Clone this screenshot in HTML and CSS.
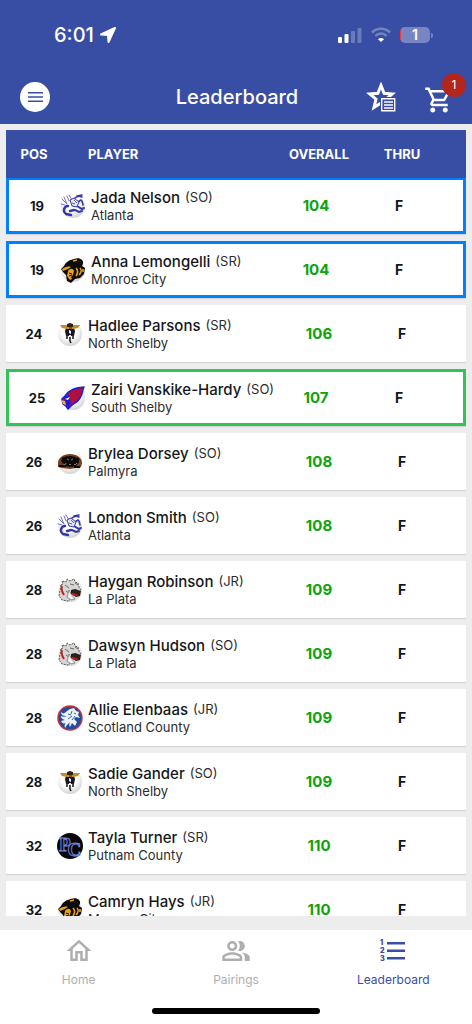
FILE: index.html
```html
<!DOCTYPE html>
<html lang="en">
<head>
  <meta charset="UTF-8">
  <meta name="viewport" content="width=device-width, initial-scale=1.0">
  <title>Leaderboard</title>
  <link rel="stylesheet" href="styles.css">
</head>
<body>
  <!-- team logos, used by the rows below -->
  <svg class="sprites" aria-hidden="true">
    <defs>
      <radialGradient id="disc" cx="45%" cy="35%" r="65%">
        <stop offset="0.5" stop-color="#fff"/>
        <stop offset="1" stop-color="#d4d4d4"/>
      </radialGradient>
    </defs>
    <symbol id="atlanta" viewBox="0 0 26 26">
      <circle cx="13" cy="13" r="12" fill="url(#disc)"/>
      <g fill="none" stroke="#3438a8" stroke-linecap="round">
        <path d="M4 4l3 7M2 6l4 4M9 2l3 5M7 3l2 5M1 11l4 1" stroke-width="0.7"/>
        <path d="M8 13c-4 0-5 5-3 7M6 21l5 1M10 18l4-1" stroke-width="2.400"/>
        <path d="M15 5c2-2 5-2 7-1M17 3l5-1M18 9l3-2M22 8l1 4" stroke-width="1.600"/>
        <path d="M17 13l5 3 2-1M15 17l4 2 3-1" stroke-width="2"/>
      </g>
      <path d="M10 7l4-2 5 4-2 5-5-1z" fill="#e8e8f8" stroke="#3438a8" stroke-width="1"/>
      <path d="M14 7l3 3M12 10l3 1" stroke="#3438a8" stroke-width="0.8"/>
    </symbol>
    <symbol id="monroe" viewBox="0 0 26 26">
      <circle cx="13" cy="13" r="12" fill="url(#disc)"/>
      <path d="M1 12l3-3c2-4 5-6 10-7 3-1 6-1 8 1 2 2 1 4 0 6l3 2-1 6-4 4-5 1-4 4-4-2-1-6-3-3z" fill="#0c0b09"/>
      <path d="M2 12c3-2 6-3 9-2l-3 2-5 2z" fill="#e8a11c"/>
      <path d="M8 14c2-3 5-3 6 0l-1 4-2 2 1 2-2 1-3-4z" fill="#e8a11c"/>
      <path d="M16 11c2 2 2 5 0 8M20 11c2 2 1 5-1 7M23 12v3M13 4l4-1" stroke="#e8a11c" stroke-width="1.600" fill="none"/>
      <path d="M9 16l3 1M9 19l3-1" stroke="#0c0b09" stroke-width="1"/>
    </symbol>
    <symbol id="northshelby" viewBox="0 0 26 26">
      <circle cx="13" cy="13" r="12" fill="url(#disc)"/>
      <path d="M9 7h8l1 3-1 5H9l-1-5z" fill="#17181c"/>
      <path d="M3 4h20l-2 3-5 1h-6L5 7z" fill="#c08f22"/>
      <path d="M10 3l3-1 3 1v3h-6z" fill="#2b211b"/>
      <path d="M12 6h3v2h-3z" fill="#a33a2b"/>
      <path d="M12 9l2 1v3l-2-1zM12 14h2v3h-2z" fill="#eee"/>
      <path d="M10 14v4M16 14v4M13 16v4l1 2" stroke="#222" stroke-width="1.600" fill="none"/>
    </symbol>
    <symbol id="southshelby" viewBox="0 0 26 26">
      <circle cx="13" cy="13" r="12" fill="url(#disc)"/>
      <path d="M2 14l3-3c4-6 9-8 19-9-2 4-1 7-4 11-3 5-6 5-9 8l-3 3-2-3-3-2z" fill="#b01040" stroke="#1c1ce0" stroke-width="1.500" stroke-linejoin="round"/>
      <path d="M4 12l5-2 1 5 1 3-3 5-3-6z" fill="#1c1ce0"/>
      <path d="M1 15l4 1 1 4-3-1z" fill="#f0b52c"/>
      <path d="M5 14l5-2-2 3z" fill="#fff"/>
    </symbol>
    <symbol id="palmyra" viewBox="0 0 26 26">
      <circle cx="13" cy="13" r="12" fill="url(#disc)"/>
      <path d="M1 14c0-5 5-9 12-9s12 4 12 9l-1 4-5 1-6 1-8-1-4-1z" fill="#7a4119"/>
      <path d="M4 12c1-4 5-5 9-5s9 2 9 6l-3 4-5 1-7-1z" fill="#0d0b0a"/>
      <path d="M2 17h7M17 18h6M5 10l2-1M20 9l2 2" stroke="#0d0b0a" stroke-width="2"/>
      <path d="M6 15l2 1 1-2M12 15l1 1 1-1M17 15l1 1 2-2M10 10l2 1M16 10l-2 1" stroke="#a3968c" stroke-width="0.800" fill="none"/>
    </symbol>
    <symbol id="laplata" viewBox="0 0 26 26">
      <circle cx="13" cy="13" r="12" fill="url(#disc)"/>
      <path d="M4 8l2-1-1-3 4 1 1-3 3 2 4-2 1 3 3 1 1 4 2 3-3 3-4-1-4 1 2 5-4 3-6-1-3-4z" fill="#d5d5d3" stroke="#555" stroke-width="1" stroke-dasharray="2 1"/>
      <path d="M5 9c-1 3 0 6 2 9" stroke="#c4231f" stroke-width="2" fill="none"/>
      <path d="M14 13l4-1 6 2-1 5-4 1-5-3z" fill="#28201f"/>
      <path d="M15 16l5 1 1 2-6-1z" fill="#c4231f"/>
      <path d="M8 8l4 3M13 7l4 1M18 6l3 2M9 14l3 2" stroke="#666" stroke-width="1" fill="none"/>
      <path d="M12 13l2 4 4 5-4 1-4-3z" fill="#efefed" stroke="#777" stroke-width="0.800"/>
    </symbol>
    <symbol id="scotland" viewBox="0 0 26 26">
      <circle cx="13" cy="13" r="12" fill="#1f4e9e" stroke="#c9303c" stroke-width="1.500"/>
      <path d="M4 7c2 2 3 2 6-1l3-2 4-1 2 3 3 1-1 3 2 3-4-1-2 2 3 3-2 4-3-3-2 4c-1-2-1-3 0-5l-3 3-2 3c-1-3 0-4 1-5-3 1-4 0-5-2l4-1c-3-1-4-2-4-4 2 1 4 1 6 0-4 0-6-1-6-4z" fill="#eef2f7"/>
      <path d="M11 9l3 1M15 6l-1 3M11 14l4-3M15 15l3-4M17 8l2 1" stroke="#1f4e9e" stroke-width="0.900"/>
    </symbol>
    <symbol id="putnam" viewBox="0 0 26 26">
      <circle cx="13" cy="13" r="13" fill="#070709"/>
      <text class="monogram" x="2" y="18">P<tspan dx="-3" dy="5">C</tspan></text>
    </symbol>
  </svg>

  <header>
    <div class="status-bar">
      <span class="time">6:01</span>
      <svg class="location" viewBox="0 0 16 16"><path d="M15 1L8.500 15 8 8 1 7.500z" fill="#fff" stroke="#fff" stroke-width="2" stroke-linejoin="round"/></svg>
      <svg class="signal" viewBox="0 0 24 16" fill="#fff">
        <rect x="0" y="10" width="4" height="6" rx="1"/>
        <rect x="6.500" y="7" width="4" height="9" rx="1"/>
        <g opacity="0.25">
          <rect x="13" y="4" width="4" height="12" rx="1"/>
          <rect x="19.500" y="1" width="4" height="15" rx="1"/>
        </g>
      </svg>
      <svg class="wifi" viewBox="0 0 20 16" fill="none" stroke="#fff" stroke-width="2.500">
        <path d="M1 5.500c5-5 13-5 18 0M4.300 9c3.200-3.300 8.200-3.300 11.400 0" opacity="0.3"/>
        <path d="M10 15L7 12.300c1.700-1.800 4.300-1.800 6 0z" fill="#fff" stroke="none"/>
      </svg>
      <span class="battery">1</span>
    </div>
    <div class="app-bar">
      <button class="menu" aria-label="Menu">
        <svg viewBox="0 0 16 12" stroke="#384ea5" stroke-width="1.600"><path d="M0 1.500h16M0 6h16M0 10.500h16"/></svg>
      </button>
      <h1>Leaderboard</h1>
      <div class="actions">
        <button aria-label="Favorites">
          <svg viewBox="0 0 30 30">
            <path d="M15 3.500l3.100 7.800 8.200.6-6.300 5.300 2 8.300-7-4.500-7 4.500 2-8.300-6.300-5.300 8.200-.6z" fill="none" stroke="#fff" stroke-width="3"/>
            <path d="M14 15h16v15H14z" fill="#384ea5"/>
            <path d="M15.700 16.700h13v12h-13zM18 20h9M18 23h9M18 26h9" fill="none" stroke="#fff" stroke-width="1.400"/>
          </svg>
        </button>
        <button class="cart" aria-label="Cart">
          <svg viewBox="0 0 24 24" fill="#fff"><path d="M15.550 13c.75 0 1.410-.41 1.750-1.030l3.580-6.490A.996.996 0 0 0 20.010 4H5.210l-.94-2H1v2h2l3.600 7.590-1.350 2.440C4.520 15.370 5.480 17 7 17h12v-2H7l1.100-2h7.450zM6.160 6h12.150l-2.760 5H8.530L6.160 6zM7 18c-1.100 0-1.990.9-1.990 2S5.900 22 7 22s2-.9 2-2-.9-2-2-2zm10 0c-1.100 0-1.990.9-1.990 2s.89 2 1.990 2 2-.9 2-2-.9-2-2-2z"/></svg>
          <span class="badge">1</span>
        </button>
      </div>
    </div>
  </header>

  <main>
    <table>
      <thead>
        <tr><th>POS</th><th class="player-head">PLAYER</th><th>OVERALL</th><th>THRU</th></tr>
      </thead>
      <tbody>
        <tr class="blue">
          <td class="pos">19</td>
          <td class="player"><svg><use href="#atlanta"/></svg><div><p class="name">Jada Nelson <span>(SO)</span></p><p class="school">Atlanta</p></div></td>
          <td class="score">104</td><td>F</td>
        </tr>
        <tr class="blue">
          <td class="pos">19</td>
          <td class="player"><svg><use href="#monroe"/></svg><div><p class="name">Anna Lemongelli <span>(SR)</span></p><p class="school">Monroe City</p></div></td>
          <td class="score">104</td><td>F</td>
        </tr>
        <tr>
          <td class="pos">24</td>
          <td class="player"><svg><use href="#northshelby"/></svg><div><p class="name">Hadlee Parsons <span>(SR)</span></p><p class="school">North Shelby</p></div></td>
          <td class="score">106</td><td>F</td>
        </tr>
        <tr class="green">
          <td class="pos">25</td>
          <td class="player"><svg><use href="#southshelby"/></svg><div><p class="name">Zairi Vanskike-Hardy <span>(SO)</span></p><p class="school">South Shelby</p></div></td>
          <td class="score">107</td><td>F</td>
        </tr>
        <tr>
          <td class="pos">26</td>
          <td class="player"><svg><use href="#palmyra"/></svg><div><p class="name">Brylea Dorsey <span>(SO)</span></p><p class="school">Palmyra</p></div></td>
          <td class="score">108</td><td>F</td>
        </tr>
        <tr>
          <td class="pos">26</td>
          <td class="player"><svg><use href="#atlanta"/></svg><div><p class="name">London Smith <span>(SO)</span></p><p class="school">Atlanta</p></div></td>
          <td class="score">108</td><td>F</td>
        </tr>
        <tr>
          <td class="pos">28</td>
          <td class="player"><svg><use href="#laplata"/></svg><div><p class="name">Haygan Robinson <span>(JR)</span></p><p class="school">La Plata</p></div></td>
          <td class="score">109</td><td>F</td>
        </tr>
        <tr>
          <td class="pos">28</td>
          <td class="player"><svg><use href="#laplata"/></svg><div><p class="name">Dawsyn Hudson <span>(SO)</span></p><p class="school">La Plata</p></div></td>
          <td class="score">109</td><td>F</td>
        </tr>
        <tr>
          <td class="pos">28</td>
          <td class="player"><svg><use href="#scotland"/></svg><div><p class="name">Allie Elenbaas <span>(JR)</span></p><p class="school">Scotland County</p></div></td>
          <td class="score">109</td><td>F</td>
        </tr>
        <tr>
          <td class="pos">28</td>
          <td class="player"><svg><use href="#northshelby"/></svg><div><p class="name">Sadie Gander <span>(SO)</span></p><p class="school">North Shelby</p></div></td>
          <td class="score">109</td><td>F</td>
        </tr>
        <tr>
          <td class="pos">32</td>
          <td class="player"><svg><use href="#putnam"/></svg><div><p class="name">Tayla Turner <span>(SR)</span></p><p class="school">Putnam County</p></div></td>
          <td class="score">110</td><td>F</td>
        </tr>
        <tr>
          <td class="pos">32</td>
          <td class="player"><svg><use href="#monroe"/></svg><div><p class="name">Camryn Hays <span>(JR)</span></p><p class="school">Monroe City</p></div></td>
          <td class="score">110</td><td>F</td>
        </tr>
      </tbody>
    </table>
  </main>

  <footer>
    <nav>
      <a href="#home">
        <svg viewBox="0 0 24 24"><path d="M12 5.690l5 4.500V18h-2v-6H9v6H7v-7.810l5-4.500M12 3L2 12h3v8h6v-6h2v6h6v-8h3L12 3z"/></svg>
        Home
      </a>
      <a href="#pairings">
        <svg viewBox="0 0 24 24"><path d="M16.670 13.130C18.040 14.060 19 15.320 19 17v3h4v-3c0-2.180-3.570-3.470-6.330-3.870zM15 12c2.210 0 4-1.790 4-4s-1.790-4-4-4c-.47 0-.91.1-1.330.24C14.500 5.270 15 6.580 15 8s-.5 2.730-1.330 3.760c.42.14.86.24 1.330.24zM9 12c2.210 0 4-1.790 4-4s-1.790-4-4-4-4 1.790-4 4 1.790 4 4 4zm0-6c1.100 0 2 .9 2 2s-.9 2-2 2-2-.9-2-2 .9-2 2-2zM9 13c-2.670 0-8 1.340-8 4v3h16v-3c0-2.660-5.330-4-8-4zm6 5H3v-.99C3.200 16.290 6.300 15 9 15s5.800 1.290 6 2v1z"/></svg>
        Pairings
      </a>
      <a href="#leaderboard" class="active">
        <svg class="list-icon" viewBox="0 0 30 30">
          <path d="M9 6h18v2.500H9zM9 13.500h18V16H9zM9 21h18v2.500H9z"/>
          <text x="2" y="9">1</text><text x="2" y="17">2</text><text x="2" y="25">3</text>
        </svg>
        Leaderboard
      </a>
    </nav>
    <div class="home-indicator"></div>
  </footer>
</body>
</html>
```
FILE: styles.css
```css
* {
  box-sizing: border-box;
}

body {
  margin: 0;
  height: 100vh;
  display: flex;
  flex-direction: column;
  font-family: Inter, 'Liberation Sans', sans-serif;
  background-color: #ededed;
  color: #15161a;
}

h1, p {
  margin: 0;
}

svg {
  display: block;
  flex-shrink: 0;
}

button {
  padding: 0;
  border: none;
  background: none;
  cursor: pointer;
}

.sprites {
  position: absolute;
  width: 0;
  height: 0;
}

.monogram {
  font: bold 19px 'Liberation Serif', serif;
  fill: #070709;
  stroke: #6f86de;
  stroke-width: 1px;
}

/* Header */
header {
  background-color: #384ea5;
  color: white;
}

.status-bar {
  display: flex;
  align-items: center;
  height: 70px;
  padding: 0 42px 0 54px;
}

.time {
  font-size: 20px;
  font-weight: 500;
}

.location {
  width: 16px;
  height: 16px;
  margin-left: 6px;
}

.signal {
  width: 24px;
  height: 16px;
  margin-left: auto;
}

.wifi {
  width: 20px;
  height: 16px;
  margin: 0 9px;
}

.battery {
  position: relative;
  width: 30px;
  height: 16px;
  border-radius: 5px;
  background: linear-gradient(to right, #ff3b30 1px, #7786c2 1px);
  font-size: 14px;
  font-weight: 600;
  line-height: 16px;
  text-align: center;
}

.battery::after {
  content: "";
  position: absolute;
  right: -3px;
  top: 6px;
  width: 2px;
  height: 5px;
  border-radius: 0 2px 2px 0;
  background-color: #7786c2;
}

.app-bar {
  display: grid;
  grid-template-columns: 1fr auto 1fr;
  align-items: center;
  height: 54px;
  padding: 0 18px 0 20px;
}

.menu {
  display: flex;
  align-items: center;
  justify-content: center;
  width: 30px;
  height: 30px;
  border-radius: 50%;
  background-color: white;
}

.menu svg {
  width: 15px;
  height: 12px;
}

h1 {
  font-size: 20px;
  font-weight: 500;
}

.actions {
  display: flex;
  justify-content: flex-end;
  gap: 28px;
}

.actions svg {
  width: 30px;
  height: 30px;
}

.cart {
  position: relative;
  margin-top: 6px;
}

.badge {
  position: absolute;
  top: -12px;
  right: -12px;
  width: 24px;
  height: 24px;
  border-radius: 50%;
  background-color: #b3261e;
  color: white;
  font: 12px/24px Inter, sans-serif;
  text-align: center;
}

/* Standings */
main {
  flex: 1;
  min-height: 0;
  margin: 6px 6px 14px;
  overflow: hidden;
}

table, thead, tbody {
  display: block;
}

thead {
  position: sticky;
  top: 0;
  z-index: 1;
  background-color: #384ea5;
  color: white;
}

tr {
  display: grid;
  grid-template-columns: 51px minmax(0, 1fr) 90px 76px;
  align-items: center;
  padding-right: 26px;
}

thead tr {
  height: 48px;
}

th {
  padding: 0;
  font-size: 13px;
  font-weight: 700;
}

th:first-child, .pos {
  padding-left: 5px;
}

.player-head {
  padding-left: 31px;
  text-align: left;
}

tbody {
  display: flex;
  flex-direction: column;
  gap: 7px;
  margin-top: -1px;
}

tbody tr {
  height: 57px;
  background-color: white;
  box-shadow: 0 1px 1px rgba(0, 0, 0, 0.1);
}

tr.blue {
  border: 3px solid #007fff;
}

tr.green {
  border: 3px solid #32c457;
}

td {
  padding: 0;
  font-size: 14px;
  font-weight: 700;
  text-align: center;
}

.pos {
  font-size: 13px;
}

.player {
  display: flex;
  align-items: center;
  gap: 5px;
  font-weight: 400;
  text-align: left;
  white-space: nowrap;
}

.player svg {
  width: 26px;
  height: 26px;
}

.name {
  font-size: 15px;
  font-weight: 500;
  line-height: 18px;
}

.name span {
  margin-left: 1px;
  font-size: 13px;
  font-weight: 400;
  line-height: 16px;
  vertical-align: top;
}

.school {
  font-size: 13px;
  line-height: 16px;
}

.name span, .school {
  color: #2b2c30;
}

.score {
  color: #0ca30c;
  font-size: 15px;
}

/* Bottom tabs */
footer {
  height: 94px;
  background-color: white;
}

nav {
  display: flex;
  height: 78px;
}

nav a {
  flex: 1;
  display: flex;
  flex-direction: column;
  align-items: center;
  gap: 6px;
  padding-top: 6px;
  color: #aeaeae;
  font-size: 12px;
  line-height: 16px;
  text-decoration: none;
}

nav svg {
  width: 30px;
  height: 30px;
  fill: currentColor;
}

nav .active {
  color: #384ea5;
}

.list-icon {
  font-size: 7px;
  font-weight: 900;
}

.home-indicator {
  width: 168px;
  height: 6px;
  margin: 0 auto;
  border-radius: 3px;
  background-color: black;
}
```
